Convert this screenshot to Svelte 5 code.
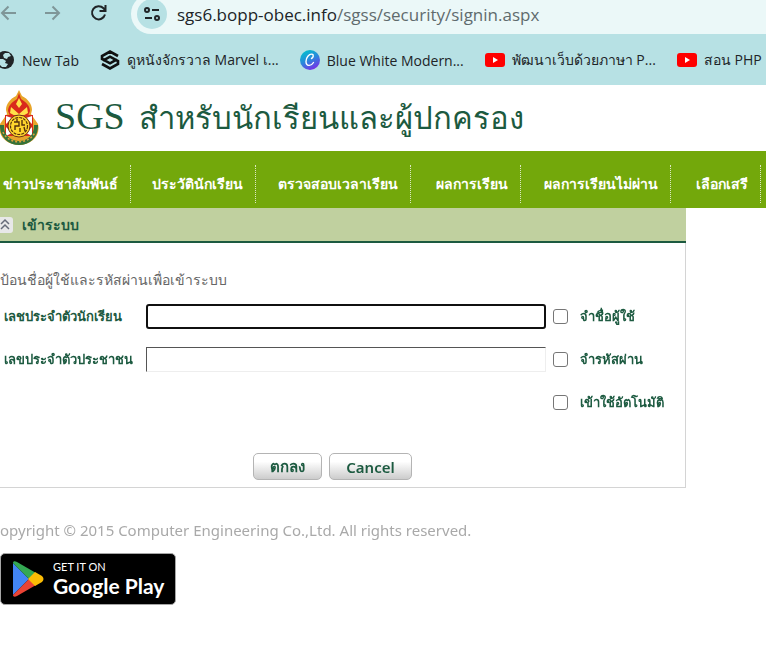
<script>
  import { onMount } from 'svelte';

  const menu = [
    'ข่าวประชาสัมพันธ์',
    'ประวัตินักเรียน',
    'ตรวจสอบเวลาเรียน',
    'ผลการเรียน',
    'ผลการเรียนไม่ผ่าน',
    'เลือกเสรี',
  ];

  let studentId = $state('');
  let citizenId = $state('');
  let first;

  onMount(() => first.focus());
</script>

{#snippet youtube()}
  <svg width="20" height="14" viewBox="0 0 20 14" aria-hidden="true">
    <rect width="20" height="14" rx="3" fill="#f00" />
    <path d="M8 4l5 3-5 3z" fill="#fff" />
  </svg>
{/snippet}

<div class="browser">
  <div class="toolbar">
    <button type="button" class="tool back" aria-label="Back">
      <svg width="16" height="16" viewBox="0 0 16 16"><path d="M16 8H2M8.500 1.500L2 8l6.500 6.500" /></svg>
    </button>
    <button type="button" class="tool forward" aria-label="Forward">
      <svg width="16" height="16" viewBox="0 0 16 16"><path d="M0 8h14M7.500 1.500L14 8l-6.500 6.500" /></svg>
    </button>
    <button type="button" class="tool reload" aria-label="Reload">
      <svg width="18" height="18" viewBox="0 0 18 18"><path d="M15 10.500a6.600 6.600 0 1 1-1.500-6.200L15.500 6.500M15.500 1v6h-6" /></svg>
    </button>
    <div class="address">
      <span class="site">
        <svg width="16" height="14" viewBox="0 0 16 14" fill="none" stroke="#202427" stroke-width="2">
          <circle cx="3" cy="3" r="2" /><path d="M8 3h7M1 11h7" /><circle cx="13" cy="11" r="2" />
        </svg>
      </span>
      <span class="url">sgs6.bopp-obec.info<span class="path">/sgss/security/signin.aspx</span></span>
    </div>
  </div>

  <div class="bookmarks">
    <a href="#newtab">
      <svg width="15" height="20" viewBox="5 0 15 20" aria-hidden="true">
        <circle cx="10" cy="10" r="9" fill="#202427" />
        <path d="M3 9l5 0 3 2-1 2 3 1-2 3-4 0-3-3zM10 3l4 0 2 3-3 1-1 2-3-1-1-3z" fill="#b7e1e4" />
      </svg>
      New Tab
    </a>
    <a href="#marvel">
      <svg width="20" height="20" viewBox="0 0 20 20" fill="none" stroke="#111" stroke-width="2.600" aria-hidden="true">
        <path d="M18 6l-8-4.500L2 6v3l8 4.300 7-4M2 14l8 4.500 8-4.500v-3l-8-4.300-7 4" />
      </svg>
      ดูหนังจักรวาล Marvel เ...
    </a>
    <a href="#canva">
      <svg width="20" height="20" viewBox="0 0 20 20" aria-hidden="true">
        <defs>
          <linearGradient id="canva" x1="0.200" y1="0" x2="0.700" y2="1">
            <stop offset="0" stop-color="#00c4cc" /><stop offset="0.500" stop-color="#2a87dc" /><stop offset="1" stop-color="#7d2ae8" />
          </linearGradient>
        </defs>
        <circle cx="10" cy="10" r="10" fill="url(#canva)" />
        <path d="M11.500 8.500c2-1 2.500-4 .5-4.300C9 3.800 6 7.500 6 11.500c0 5 5 5 7.500 1" fill="none" stroke="#fff" stroke-width="1.400" stroke-linecap="round" />
      </svg>
      Blue White Modern...
    </a>
    <a href="#php">{@render youtube()} พัฒนาเว็บด้วยภาษา P...</a>
    <a href="#php2">{@render youtube()} สอน PHP</a>
  </div>
</div>

<header>
  <svg class="crest" width="39" height="56" viewBox="1 0 39 56" aria-hidden="true">
    <path d="M20 0l3 6c6 3 10 8 10 14l-1 4 7 10c3 12-7 21-19 21S-2 46 1 34l7-10-1-4c0-6 4-11 10-14z" fill="#e8a52a" />
    <path d="M20 3l2 6c5 3 9 7 9 12l-2 5H11l-2-5c0-5 4-9 9-12z" fill="#d92a1c" />
    <path d="M20 8l3 6-3 4-3-4zM12 17l8 7 8-7 1 6-9 5-9-5z" fill="#ffe14a" />
    <path d="M6 25h28v21H6z" fill="#d92a1c" />
    <path d="M7 26l6 2-6 6zM33 26l-6 2 6 6zM7 46l6-3-6-6zM33 46l-6-3 6-6z" fill="#fff" />
    <path d="M3 35c-1 24 35 24 34 0" fill="none" stroke="#34723a" stroke-width="4" />
    <path d="M4 42c5 13 27 13 32 0" fill="none" stroke="#e0a03c" stroke-width="1.500" stroke-dasharray="2 2" />
    <circle cx="20" cy="36" r="11" fill="#ffd52d" stroke="#6b3514" />
    <circle cx="20" cy="36" r="8.500" fill="none" stroke="#54310e" stroke-width="1.200" stroke-dasharray="3 1" />
    <path d="M15 32h5v4h-4v4M23 30v5h3M21 38v4M25 37l1 4M18 29v3" fill="none" stroke="#54310e" stroke-width="1.400" />
  </svg>
  <h1><span class="sgs">SGS</span> <span>สำหรับนักเรียนและผู้ปกครอง</span></h1>
</header>

<nav>
  {#each menu as item}
    <a href="#menu"><span>{item}</span></a>
  {/each}
</nav>

<main>
  <section class="panel">
    <div class="panel-head">
      <button type="button" class="collapse" aria-label="Collapse">
        <svg width="13" height="16" viewBox="0 0 13 16">
          <path d="M1 7l4-4 4 4M1 12l4-4 4 4" fill="none" stroke="#666b78" stroke-width="1.500" />
        </svg>
      </button>
      <h2>เข้าระบบ</h2>
    </div>
    <form onsubmit={(e) => e.preventDefault()}>
      <p>ป้อนชื่อผู้ใช้และรหัสผ่านเพื่อเข้าระบบ</p>
      <div class="fields">
        <label for="student">เลชประจำตัวนักเรียน</label>
        <input id="student" type="text" bind:this={first} bind:value={studentId} />
        <label class="check"><input type="checkbox" /> จำชื่อผู้ใช้</label>

        <label for="citizen">เลขประจำตัวประชาชน</label>
        <input id="citizen" type="password" bind:value={citizenId} />
        <label class="check"><input type="checkbox" /> จำรหัสผ่าน</label>

        <label class="check auto"><input type="checkbox" /> เข้าใช้อัตโนมัติ</label>
      </div>
      <div class="buttons">
        <button type="submit">ตกลง</button>
        <button type="reset">Cancel</button>
      </div>
    </form>
  </section>
</main>

<footer>
  <p>opyright © 2015 Computer Engineering Co.,Ltd. All rights reserved.</p>
  <a class="play" href="#play">
    <svg width="32" height="36" viewBox="0 0 32 36" aria-hidden="true">
      <path d="M1 2v32l16-16z" fill="#4285f4" />
      <path d="M1 2c0-2 2-2 4-1l19 11-7 6z" fill="#34a853" />
      <path d="M1 34c0 2 2 2 4 1l19-11-7-6z" fill="#ea4335" />
      <path d="M23 11l7 4c2 2 2 4 0 6l-7 4-7-7z" fill="#fbbc04" />
    </svg>
    <span class="play-text"><small>GET IT ON</small><strong>Google Play</strong></span>
  </a>
</footer>

<style>
  :global(body) {
    margin: 0;
    background: #fff;
    font-family: 'Noto Sans', 'Open Sans', sans-serif;
    font-size: 15px;
    overflow-x: hidden;
  }

  a {
    color: inherit;
    text-decoration: none;
  }

  .browser {
    height: 85px;
    background: #b7e1e4;
    color: #202427;
    overflow: hidden;
  }

  .toolbar {
    display: flex;
    align-items: flex-start;
    height: 34px;
  }

  .tool {
    padding: 5px 0 0;
    border: 0;
    background: none;
    flex: none;
    width: 45px;
    text-align: left;
    line-height: 0;
  }

  .tool svg {
    fill: none;
    stroke: #7f9698;
    stroke-width: 2;
  }

  .tool.reload {
    width: 41px;
    padding-top: 4px;
  }

  .tool.reload svg {
    stroke: #202427;
  }

  .address {
    flex: 1;
    display: flex;
    align-items: center;
    gap: 10px;
    height: 40px;
    margin-top: -6px;
    padding-left: 6px;
    border-radius: 20px 0 0 20px;
    background: #ebf8f8;
    overflow: hidden;
  }

  .site {
    display: flex;
    align-items: center;
    justify-content: center;
    width: 30px;
    height: 30px;
    border-radius: 50%;
    background: #b7e1e4;
  }

  .url {
    font: 17px 'Open Sans', sans-serif;
    white-space: nowrap;
  }

  .path {
    color: #5f6b6d;
  }

  .bookmarks {
    display: flex;
    align-items: center;
    gap: 21px;
    height: 52px;
    white-space: nowrap;
    font-family: 'Open Sans', sans-serif;
    font-size: 14px;
  }

  .bookmarks a {
    display: flex;
    align-items: center;
    gap: 7px;
    flex: none;
  }

  .bookmarks svg {
    flex: none;
  }

  header {
    display: flex;
    align-items: center;
    gap: 16px;
    height: 66px;
  }

  h1 {
    display: flex;
    align-items: baseline;
    gap: 14px;
    margin: 0;
    color: #1c5a40;
    font: 300 31px 'Liberation Serif', serif;
    white-space: nowrap;
  }

  .sgs {
    font-size: 38px;
  }

  nav {
    display: grid;
    grid-template-columns: 131px 125px 155px 110px 150px 90px;
    height: 57px;
    background: #73a80b;
    color: #fff;
    font-weight: bold;
    font-size: 14px;
    overflow: hidden;
  }

  nav a {
    display: flex;
    justify-content: flex-end;
    align-items: center;
    height: 38px;
    margin-top: 14px;
    padding-right: 12px;
    border-right: 1px dotted #dde8c4;
    white-space: nowrap;
  }

  .panel {
    max-width: 685px;
    border-right: 1px solid #d4d4d4;
    border-bottom: 1px solid #d4d4d4;
  }

  .panel-head {
    display: flex;
    align-items: center;
    gap: 9px;
    height: 33px;
    margin-right: -1px;
    border-bottom: 2px solid #1c5a40;
    background: #c0d09f;
  }

  .collapse {
    width: 13px;
    height: 16px;
    padding: 0;
    border: 0;
    border-radius: 0 3px 3px 0;
    background: #e8e8e8;
    line-height: 0;
  }

  h2 {
    margin: 0;
    color: #1c5a40;
    font-size: 14px;
  }

  form {
    padding: 24px 0 7px;
  }

  form p {
    margin: 0;
    color: #666;
    font-size: 14px;
    line-height: 26px;
  }

  .fields {
    display: grid;
    grid-template-columns: 142px minmax(0, 400px) 130px;
    grid-auto-rows: 43px;
    column-gap: 4px;
    align-items: center;
    margin-top: 2px;
    color: #1c5a40;
    font-weight: bold;
    font-size: 13px;
    white-space: nowrap;
  }

  .fields > label {
    padding-left: 4px;
  }

  .fields > input {
    box-sizing: border-box;
    width: 100%;
    height: 25px;
    border: 1px solid #eee;
    border-top-color: #555;
    border-left-color: #555;
    outline: 0;
    background: #fff;
  }

  .fields > input:focus {
    border: 2px solid #101010;
    border-radius: 3px;
  }

  .fields > .check {
    display: flex;
    align-items: center;
    gap: 12px;
    padding-left: 3px;
  }

  .check input {
    appearance: none;
    box-sizing: border-box;
    width: 15px;
    height: 15px;
    margin: 0;
    border: 1px solid #767676;
    border-radius: 3px;
    flex: none;
  }

  .check input:checked {
    background: #1c5a40;
  }

  .auto {
    grid-column: 3;
  }

  .buttons {
    display: flex;
    justify-content: center;
    gap: 7px;
    margin-top: 29px;
    padding-right: 20px;
  }

  .buttons button {
    height: 27px;
    padding: 0 16px;
    border: 1px solid #b4b4b4;
    border-radius: 5px;
    background: linear-gradient(#fff 30%, #ccc);
    color: #1c5a40;
    font: 600 15px 'Noto Sans', sans-serif;
  }

  footer {
    padding-top: 29px;
  }

  footer p {
    margin: 0 0 10px;
    color: #a9a9a9;
    line-height: 26px;
    white-space: nowrap;
  }

  .play {
    display: flex;
    align-items: center;
    gap: 9px;
    box-sizing: border-box;
    width: 176px;
    height: 52px;
    padding-left: 11px;
    border: 1px solid #a6a6a6;
    border-radius: 5px;
    background: #000;
    color: #fff;
    font-family: Lato, sans-serif;
    white-space: nowrap;
  }

  .play-text {
    display: flex;
    flex-direction: column;
  }

  small {
    font-size: 11px;
    line-height: 14px;
  }

  strong {
    font-size: 21px;
    line-height: 24px;
  }
</style>
